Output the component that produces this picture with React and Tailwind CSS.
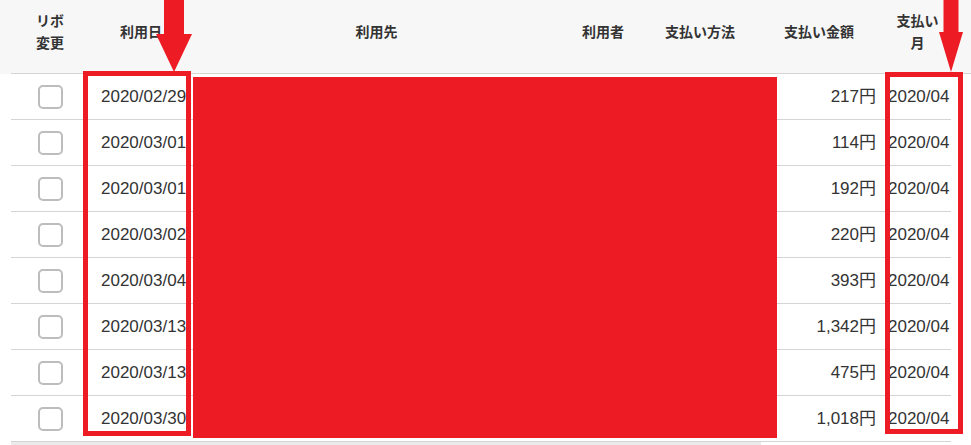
import React from "react";

const rows = [
  ["2020/02/29", "217円"],
  ["2020/03/01", "114円"],
  ["2020/03/01", "192円"],
  ["2020/03/02", "220円"],
  ["2020/03/04", "393円"],
  ["2020/03/13", "1,342円"],
  ["2020/03/13", "475円"],
  ["2020/03/30", "1,018円"],
];

const grid = "grid grid-cols-[78px_104px_367px_86px_108px_130px_67px]";
const hdr = "flex items-center justify-center text-center text-[14px] font-bold leading-[22px] text-[#333]";

function Arrow({ className, shaftW, headW, shaftH }) {
  const w = headW;
  const c = w / 2;
  return (
    <svg className={className} width={w} height={72} viewBox={`0 0 ${w} 72`}>
      <polygon
        fill="#ed1c24"
        points={`${c - shaftW / 2},0 ${c + shaftW / 2},0 ${c + shaftW / 2},${shaftH} ${w},${shaftH} ${c},72 0,${shaftH} ${c - shaftW / 2},${shaftH}`}
      />
    </svg>
  );
}

export default function App() {
  return (
    <div
      className="relative w-[971px] h-[445px] overflow-hidden bg-white text-[#333]"
      style={{ fontFamily: '"Liberation Sans", Arial, "Noto Sans CJK JP", sans-serif' }}
    >
      <div className="bg-[#f7f7f7]">
        <div className={`${grid} ml-[11px] h-[74px] border-b border-[#d4d4d4] pb-[12px]`}>
          <div className={hdr} style={{ fontFamily: '"Noto Sans CJK JP", sans-serif' }}>
            <span>リボ<br />変更</span>
          </div>
          <div className={hdr} style={{ fontFamily: '"Noto Sans CJK JP", sans-serif' }}>利用日</div>
          <div className={hdr} style={{ fontFamily: '"Noto Sans CJK JP", sans-serif' }}>利用先</div>
          <div className={hdr} style={{ fontFamily: '"Noto Sans CJK JP", sans-serif' }}>利用者</div>
          <div className={hdr} style={{ fontFamily: '"Noto Sans CJK JP", sans-serif' }}>支払い方法</div>
          <div className={hdr} style={{ fontFamily: '"Noto Sans CJK JP", sans-serif' }}>支払い金額</div>
          <div className={hdr} style={{ fontFamily: '"Noto Sans CJK JP", sans-serif' }}>
            <span>支払い<br />月</span>
          </div>
        </div>
      </div>

      <div className="ml-[11px] w-[940px]">
        {rows.map(([d, amt], i) => (
          <div key={i} className={`${grid} h-[46px] border-b border-[#d4d4d4] text-[17px]`}>
            <div className="flex items-center justify-center">
              <div className="w-[25px] h-[24px] rounded-[5px] border-2 border-[#bdbdbd] bg-white" />
            </div>
            <div className="flex items-center pl-[12px] overflow-hidden whitespace-nowrap">{d}</div>
            <div />
            <div />
            <div />
            <div className="flex items-center justify-end pr-[8px] whitespace-nowrap">{amt}</div>
            <div className="flex items-center pl-[4px] whitespace-nowrap">2020/04</div>
          </div>
        ))}
      </div>
      <div className="ml-[11px] w-[750px] h-[4px] bg-[#ebebeb]" />

      {/* redaction */}
      <div className="absolute left-[193px] top-[77px] w-[584px] h-[361px] bg-[#ed1c24]" />
      {/* highlight boxes */}
      <div className="absolute left-[83px] top-[71px] w-[108px] h-[365px] border-[5px] border-[#ed1c24]" />
      <div className="absolute left-[885px] top-[72px] w-[78px] h-[362px] border-[5px] border-[#ed1c24]" />
      {/* arrows */}
      <Arrow className="absolute left-[156px] top-0" shaftW={20} headW={36} shaftH={34} />
      <Arrow className="absolute left-[939px] top-0" shaftW={15} headW={24} shaftH={32} />
    </div>
  );
}
